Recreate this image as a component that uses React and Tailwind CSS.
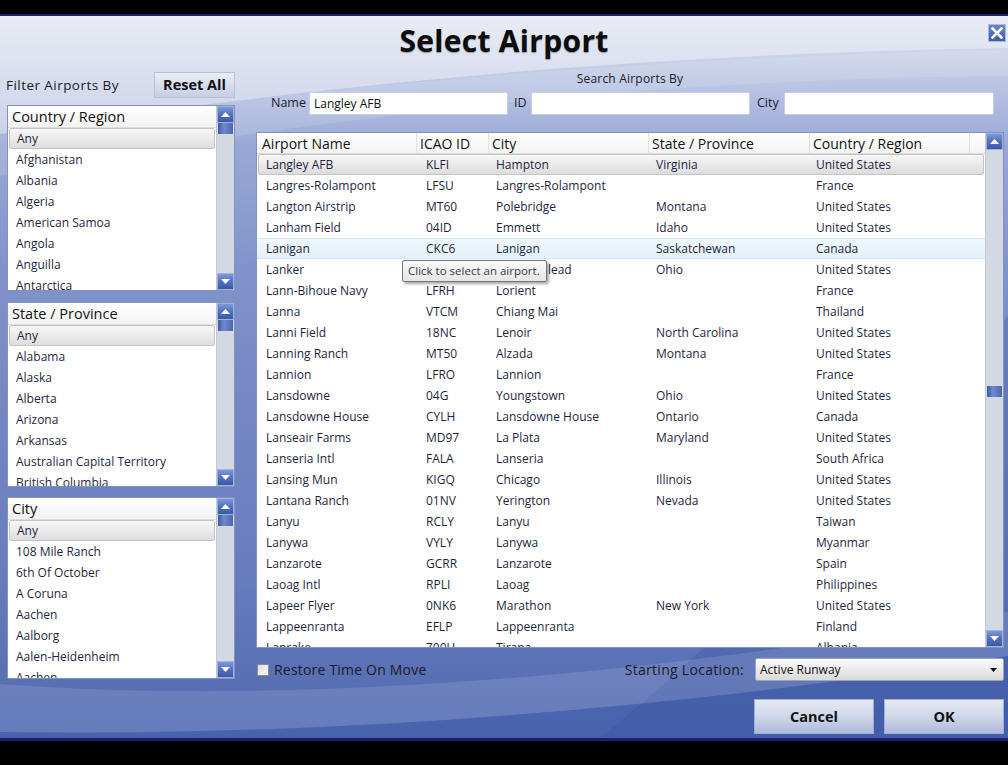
import React from "react";

const countries = ["Afghanistan", "Albania", "Algeria", "American Samoa", "Angola", "Anguilla", "Antarctica"];
const states = ["Alabama", "Alaska", "Alberta", "Arizona", "Arkansas", "Australian Capital Territory", "British Columbia"];
const cities = ["108 Mile Ranch", "6th Of October", "A Coruna", "Aachen", "Aalborg", "Aalen-Heidenheim", "Aachen"];

const rows = [
  ["Langley AFB", "KLFI", "Hampton", "Virginia", "United States"],
  ["Langres-Rolampont", "LFSU", "Langres-Rolampont", "", "France"],
  ["Langton Airstrip", "MT60", "Polebridge", "Montana", "United States"],
  ["Lanham Field", "04ID", "Emmett", "Idaho", "United States"],
  ["Lanigan", "CKC6", "Lanigan", "Saskatchewan", "Canada"],
  ["Lanker", "4OH5", "Mount Gilead", "Ohio", "United States"],
  ["Lann-Bihoue Navy", "LFRH", "Lorient", "", "France"],
  ["Lanna", "VTCM", "Chiang Mai", "", "Thailand"],
  ["Lanni Field", "18NC", "Lenoir", "North Carolina", "United States"],
  ["Lanning Ranch", "MT50", "Alzada", "Montana", "United States"],
  ["Lannion", "LFRO", "Lannion", "", "France"],
  ["Lansdowne", "04G", "Youngstown", "Ohio", "United States"],
  ["Lansdowne House", "CYLH", "Lansdowne House", "Ontario", "Canada"],
  ["Lanseair Farms", "MD97", "La Plata", "Maryland", "United States"],
  ["Lanseria Intl", "FALA", "Lanseria", "", "South Africa"],
  ["Lansing Mun", "KIGQ", "Chicago", "Illinois", "United States"],
  ["Lantana Ranch", "01NV", "Yerington", "Nevada", "United States"],
  ["Lanyu", "RCLY", "Lanyu", "", "Taiwan"],
  ["Lanywa", "VYLY", "Lanywa", "", "Myanmar"],
  ["Lanzarote", "GCRR", "Lanzarote", "", "Spain"],
  ["Laoag Intl", "RPLI", "Laoag", "", "Philippines"],
  ["Lapeer Flyer", "0NK6", "Marathon", "New York", "United States"],
  ["Lappeenranta", "EFLP", "Lappeenranta", "", "Finland"],
  ["Laprake", "Z00U", "Tirana", "", "Albania"],
];

function Arrow({ up }) {
  return (
    <div className="h-[17px] w-full bg-[linear-gradient(180deg,#7f99d8_0%,#5574c0_45%,#3b58a6_100%)] border border-[#9fb2de] flex items-center justify-center">
      <svg width="9" height="5" viewBox="0 0 9 5">
        {up ? <path d="M0 5 L4.5 0 L9 5 Z" fill="#fff" /> : <path d="M0 0 L4.5 5 L9 0 Z" fill="#fff" />}
      </svg>
    </div>
  );
}

function ScrollBar({ thumbClass }) {
  return (
    <div className="w-[18px] shrink-0 flex flex-col bg-[#d3d9e2] border-l border-[#c3c9d3]">
      <Arrow up />
      <div className="flex-1 flex flex-col">
        <div className={`h-[11px] mx-px bg-[linear-gradient(90deg,#3d5aa6_0%,#6f89cc_40%,#4c67b0_100%)] ${thumbClass}`} />
      </div>
      <Arrow />
    </div>
  );
}

function FilterList({ title, items, className }) {
  return (
    <div className={`bg-white border border-[#8493bb] flex overflow-hidden ${className}`}>
      <div className="flex-1 min-w-0 flex flex-col overflow-hidden">
        <div className="h-[22px] shrink-0 px-[4px] flex items-center text-[14.5px] text-[#111] border-b border-[#dcdcdc] bg-[linear-gradient(180deg,#ffffff,#f3f3f3)]">
          {title}
        </div>
        <div className="h-[21px] shrink-0 mx-px flex items-center px-[7px] text-[12px] text-[#1f1f3f] rounded-[2px] border border-[#c4c4c4] bg-[linear-gradient(180deg,#f7f7f7,#dedede)]">
          Any
        </div>
        {items.map((it, i) => (
          <div key={i} className="h-[21px] shrink-0 flex items-center pl-[8px] text-[12px] text-[#1f1f3f] whitespace-nowrap">
            {it}
          </div>
        ))}
      </div>
      <ScrollBar thumbClass="mt-0" />
    </div>
  );
}

function Input({ value, className }) {
  return (
    <div className={`h-[23px] bg-white rounded-[2px] border border-[#c7cfe2] flex items-center px-[4px] text-[12px] text-[#111] ${className}`}>
      {value}
    </div>
  );
}

const cols = "grid grid-cols-[160px_72px_160px_161px_160px_1fr]";
const selCols = "grid grid-cols-[158px_72px_160px_161px_160px_1fr]";
const cellPad = ["pl-[9px]", "pl-[9px]", "pl-[7px]", "pl-[7px]", "pl-[6px]"];
const selPad = ["pl-[7px]", "pl-[9px]", "pl-[7px]", "pl-[7px]", "pl-[6px]"];

export default function App() {
  return (
    <div className="w-[1008px] h-[765px] bg-black flex flex-col font-['Open_Sans',sans-serif] overflow-hidden">
      <div className="h-[14px] shrink-0 bg-black" />
      <div className="h-[2px] shrink-0 bg-[#1c1f6b]" />
      <div className="relative h-[722px] shrink-0 overflow-hidden bg-[linear-gradient(180deg,#e3e7f1_0%,#c9d1e8_6%,#98a8d6_18%,#8193cb_35%,#7487c3_55%,#6a7ebf_75%,#5169b0_100%)]">
        {/* decorative swooshes */}
        <svg className="absolute inset-0 pointer-events-none" width="1008" height="722" viewBox="0 0 1008 722">
          <path d="M0 0 H1008 V32 C760 36 420 52 0 118 Z" fill="#eef1f8" opacity="0.55" />
          <path d="M0 118 C380 56 760 40 1008 34 V60 C760 62 430 80 0 160 Z" fill="#ffffff" opacity="0.12" />
          <path d="M1008 300 C900 420 800 560 600 722 H1008 Z" fill="#2f4c9c" opacity="0.25" />
          <path d="M0 668 C300 690 650 660 1008 596 V640 C700 690 330 722 0 716 Z" fill="#ffffff" opacity="0.12" />
          <path d="M0 716 C330 722 700 690 1008 640 V722 H0 Z" fill="#3a57a5" opacity="0.35" />
        </svg>

        {/* close button */}
        <div className="absolute top-[8px] right-[2px] w-[18px] h-[18px] bg-[linear-gradient(180deg,#6a86cc,#3f5ca8)] border border-[#a9badf] flex items-center justify-center">
          <svg width="12" height="12" viewBox="0 0 12 12">
            <path d="M1.5 1.5 L10.5 10.5 M10.5 1.5 L1.5 10.5" stroke="#fff" strokeWidth="2.6" strokeLinecap="square" />
          </svg>
        </div>

        <div className="relative flex flex-col h-full">
          <div className="h-[48px] shrink-0 flex items-center justify-center">
            <span className="text-[30px] font-bold text-[#0d0d0d] tracking-[0.3px] [text-shadow:0_1px_1px_rgba(0,0,0,0.35)]">Select Airport</span>
          </div>

          <div className="flex flex-1">
            {/* left column */}
            <div className="w-[228px] ml-[7px] shrink-0 flex flex-col pt-[8px]">
              <div className="h-[26px] flex items-center justify-between">
                <span className="-ml-px text-[13.5px] text-[#1a1a2a] tracking-[0.45px]">Filter Airports By</span>
                <div className="w-[81px] h-[26px] flex items-center justify-center text-[14.5px] font-bold text-[#111] bg-[linear-gradient(180deg,#eaedf4,#c6cee2)] border border-[#b6c0da]">
                  Reset All
                </div>
              </div>
              <FilterList title="Country / Region" items={countries} className="mt-[7px] h-[186px]" />
              <FilterList title="State / Province" items={states} className="mt-[11px] h-[185px]" />
              <FilterList title="City" items={cities} className="mt-[10px] h-[182px]" />
            </div>

            {/* right column */}
            <div className="ml-[21px] w-[748px] flex flex-col pt-[8px]">
              <div className="h-[14px] flex items-center justify-center text-[12px] text-[#1a1a2a] tracking-[0.2px]">Search Airports By</div>
              <div className="mt-[6px] h-[23px] flex items-center text-[12.5px] text-[#1a1a2a]">
                <span className="ml-[15px] w-[38px]">Name</span>
                <Input value="Langley AFB" className="w-[199px]" />
                <span className="ml-[6px] w-[17px]">ID</span>
                <Input value="" className="w-[219px]" />
                <span className="ml-[7px] w-[27px]">City</span>
                <Input value="" className="w-[210px]" />
              </div>

              {/* table */}
              <div className="relative mt-[17px] h-[516px] bg-white border border-[#8493bb] flex">
                <div className="flex-1 min-w-0 flex flex-col overflow-hidden">
                  <div className={`${cols} h-[21px] shrink-0 text-[14px] text-[#111] bg-[linear-gradient(180deg,#ffffff,#f4f4f4)] border-b border-[#d8d8d8]`}>
                    {["Airport Name", "ICAO ID", "City", "State / Province", "Country / Region", ""].map((h, i) => (
                      <div key={i} className={`flex items-center whitespace-nowrap ${i === 0 ? "pl-[5px]" : "pl-[3px]"} ${i < 5 ? "border-r border-[#e0e0e0]" : ""}`}>
                        {h}
                      </div>
                    ))}
                  </div>
                  {rows.map((r, i) => {
                    const sel = i === 0;
                    const hov = i === 4;
                    return (
                      <div
                        key={i}
                        className={`${sel ? selCols : cols} h-[21px] shrink-0 text-[12px] text-[#1f1f3f] ${
                          sel
                            ? "mx-px rounded-[2px] border border-[#c4c4c4] bg-[linear-gradient(180deg,#f7f7f7,#dcdcdc)]"
                            : hov
                            ? "border-y border-[#cfe8f5] bg-[linear-gradient(180deg,#f0f8fd,#e2f1fa)]"
                            : "border-y border-transparent"
                        }`}
                      >
                        {r.map((c, j) => (
                          <div key={j} className={`flex items-center whitespace-nowrap ${sel ? selPad[j] : cellPad[j]}`}>
                            {c}
                          </div>
                        ))}
                        <div />
                      </div>
                    );
                  })}
                </div>
                <ScrollBar thumbClass="mt-[236px]" />

                {/* tooltip */}
                <div className="absolute left-[145px] top-[127px] h-[22px] flex items-center pl-[5px] pr-[6px] text-[11.5px] text-[#3a3a3a] bg-[linear-gradient(180deg,#fafafa,#e6e6e6)] border border-[#767676] rounded-[2px] shadow-[2px_2px_3px_rgba(0,0,0,0.35)] whitespace-nowrap">
                  Click to select an airport.
                </div>
              </div>

              {/* options row */}
              <div className="mt-[10px] h-[23px] flex items-center justify-between">
                <div className="flex items-center">
                  <div className="ml-px w-[12px] h-[12px] border border-[#8e8e8e] bg-[linear-gradient(135deg,#dcdcdc,#ffffff)]" />
                  <span className="ml-[5px] text-[14px] text-[#1a1a2a] tracking-[0.2px]">Restore Time On Move</span>
                </div>
                <div className="flex items-center">
                  <span className="text-[14px] text-[#1a1a2a] tracking-[0.3px]">Starting Location:</span>
                  <div className="ml-[11px] w-[249px] h-[23px] flex items-center justify-between px-[4px] text-[12px] text-[#111] rounded-[2px] border border-[#9aa4bd] bg-[linear-gradient(180deg,#fbfbfb,#dadada)]">
                    <span>Active Runway</span>
                    <svg width="7" height="4" viewBox="0 0 7 4" className="mr-[2px]">
                      <path d="M0 0 L3.5 4 L7 0 Z" fill="#111" />
                    </svg>
                  </div>
                </div>
              </div>

              {/* buttons */}
              <div className="mt-[18px] flex justify-end gap-[10px]">
                {["Cancel", "OK"].map((b) => (
                  <div key={b} className="w-[120px] h-[35px] flex items-center justify-center text-[14.5px] font-bold text-[#111] bg-[linear-gradient(180deg,#e4e8f1_0%,#d2d9ea_45%,#aebbdb_100%)] border border-[#9fb0d8]">
                    {b}
                  </div>
                ))}
              </div>
            </div>
          </div>
        </div>
      </div>
      <div className="h-[3px] shrink-0 bg-[#1c1f6b]" />
      <div className="flex-1 bg-black" />
    </div>
  );
}
